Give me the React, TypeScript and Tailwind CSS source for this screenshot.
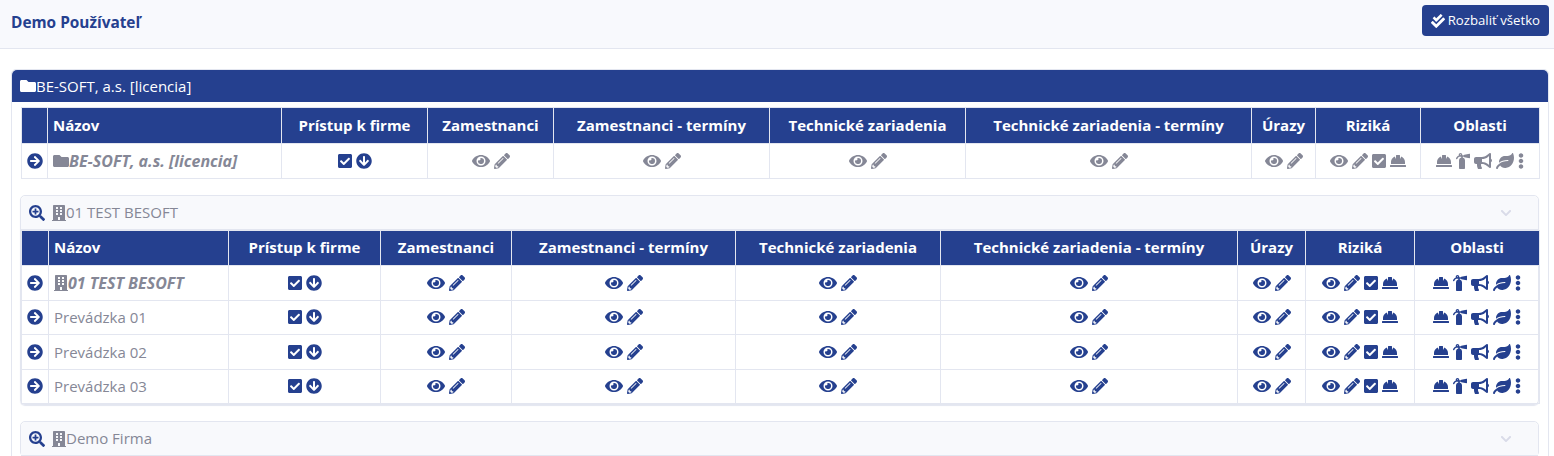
import React from 'react';
import {
  FaArrowCircleDown,
  FaArrowCircleRight,
  FaBuilding,
  FaBullhorn,
  FaCheckDouble,
  FaCheckSquare,
  FaChevronDown,
  FaEllipsisV,
  FaEye,
  FaFireExtinguisher,
  FaFolder,
  FaHardHat,
  FaLeaf,
  FaPencilAlt,
  FaSearchPlus,
} from 'react-icons/fa';

const headers = [
  'Prístup k firme',
  'Zamestnanci',
  'Zamestnanci - termíny',
  'Technické zariadenia',
  'Technické zariadenia - termíny',
  'Úrazy',
  'Riziká',
  'Oblasti',
];

const Icons = ({ kind }: { kind: 'access' | 'view' | 'risk' | 'area' }) => (
  <div className="flex items-center justify-center gap-[4px] [&>svg]:h-[16px] [&>svg]:shrink-0">
    {kind === 'access' && (
      <>
        <FaCheckSquare className="w-[14px]" />
        <FaArrowCircleDown className="w-[16px]" />
      </>
    )}
    {(kind === 'view' || kind === 'risk') && (
      <>
        <FaEye className="w-[18px]" />
        <FaPencilAlt className="w-[16px]" />
      </>
    )}
    {kind === 'risk' && (
      <>
        <FaCheckSquare className="w-[14px]" />
        <FaHardHat className="w-[16px]" />
      </>
    )}
    {kind === 'area' && (
      <>
        <FaHardHat className="w-[16px]" />
        <FaFireExtinguisher className="w-[14px]" />
        <FaBullhorn className="w-[18px]" />
        <FaLeaf className="w-[18px]" />
        <FaEllipsisV className="w-[6px]" />
      </>
    )}
  </div>
);

const kinds = ['access', 'view', 'view', 'view', 'view', 'view', 'risk', 'area'] as const;

interface CompanyTableProps {
  widths: number[];
  rows: { name: string; main?: boolean; icon?: 'folder' | 'building' }[];
  muted?: boolean;
  headHeight: string;
  rowHeight: string;
}

const CompanyTable: React.FC<CompanyTableProps> = ({ widths, rows, muted, headHeight, rowHeight }) => (
  <table className="w-full table-fixed border-collapse text-[15px]">
    <colgroup>
      {widths.map((w, i) => (
        <col key={i} style={{ width: w }} />
      ))}
    </colgroup>
    <thead>
      <tr className={`${headHeight} bg-[#25408f] text-white`}>
        <th className="border border-[#e3e6f0]" />
        <th className="border border-[#e3e6f0] px-[5px] text-left font-bold">Názov</th>
        {headers.map(h => (
          <th key={h} className="border border-[#e3e6f0] font-bold whitespace-nowrap">
            {h}
          </th>
        ))}
      </tr>
    </thead>
    <tbody>
      {rows.map(row => (
        <tr key={row.name} className={rowHeight}>
          <td className="border border-[#e3e6f0] text-[#25408f]">
            <div className="flex justify-center text-[16px]">
              <FaArrowCircleRight />
            </div>
          </td>
          <td
            className={`border border-[#e3e6f0] px-[5px] text-[#858796] ${row.main ? 'text-[16px] font-bold italic' : ''}`}
          >
            <div className="flex items-center whitespace-nowrap">
              {row.icon === 'folder' && <FaFolder className="h-[16px] w-[16px] shrink-0" />}
              {row.icon === 'building' && <FaBuilding className="h-[16px] w-[14px] shrink-0" />}
              {row.name}
            </div>
          </td>
          {kinds.map((k, i) => (
            <td
              key={i}
              className={`border border-[#e3e6f0] ${muted && k !== 'access' ? 'text-[#858796]' : 'text-[#25408f]'}`}
            >
              <Icons kind={k} />
            </td>
          ))}
        </tr>
      ))}
    </tbody>
  </table>
);

const AccordionHeader = ({ title }: { title: string }) => (
  <div className="flex h-[34px] items-center rounded-t-[5px] border-b border-[#e3e6f0] bg-[#f8f9fc] pl-[8px] pr-[26px] text-[15px] text-[#858796]">
    <FaSearchPlus className="mr-[7px] text-[16px] text-[#25408f]" />
    <FaBuilding className="h-[16px] w-[14px]" />
    <span>{title}</span>
    <FaChevronDown className="ml-auto text-[12px] text-[#d9dbe8]" />
  </div>
);

export default function App() {
  return (
    <div className="h-[456px] overflow-hidden bg-white font-['Open_Sans',sans-serif] text-[15px]">
      <div className="flex h-[49px] items-start justify-between border-b border-[#e3e6f0] bg-[#f8f9fd] pl-[11px] pr-[5px] pt-[5px]">
        <h1 className="mt-[8px] text-[15.4px] leading-[20px] font-bold text-[#25408f]">Demo Používateľ</h1>
        <button className="flex h-[31px] items-center gap-[3px] rounded-[4px] bg-[#25408f] px-[9px] text-[13.2px] text-white">
          <FaCheckDouble className="text-[14px]" />
          Rozbaliť všetko
        </button>
      </div>

      <div className="mt-[20px] mr-[5px] ml-[11px] rounded-t-[5px] border border-[#e3e6f0]">
        <div className="flex h-[32px] items-center rounded-t-[5px] bg-[#25408f] pl-[8px] text-[15px] text-white">
          <FaFolder className="h-[16px] w-[16px]" />
          BE-SOFT, a.s. [licencia]
        </div>
        <div className="pt-[5px] pr-[9px] pl-[8px]">
          <div className="ml-[1px]">
            <CompanyTable
              widths={[26, 234, 146, 126, 216, 196, 286, 64, 105, 119]}
              rows={[{ name: 'BE-SOFT, a.s. [licencia]', main: true, icon: 'folder' }]}
              headHeight="h-[36px]"
              rowHeight="h-[35px]"
              muted
            />
          </div>

          <div className="mt-[16px] rounded-[5px] border border-[#e3e6f0] shadow-[0_1px_1px_#e3e6f0]">
            <AccordionHeader title="01 TEST BESOFT" />
            <CompanyTable
              widths={[27, 180, 152, 131, 224, 205, 297, 68, 109, 125]}
              rows={[
                { name: '01 TEST BESOFT', main: true, icon: 'building' },
                { name: 'Prevádzka 01' },
                { name: 'Prevádzka 02' },
                { name: 'Prevádzka 03' },
              ]}
              headHeight="h-[35px] [&>th]:pb-[2px]"
              rowHeight="h-[34.5px]"
            />
          </div>

          <div className="mt-[16px] rounded-[5px] border border-[#e3e6f0]">
            <AccordionHeader title="Demo Firma" />
          </div>
        </div>
      </div>
    </div>
  );
}
